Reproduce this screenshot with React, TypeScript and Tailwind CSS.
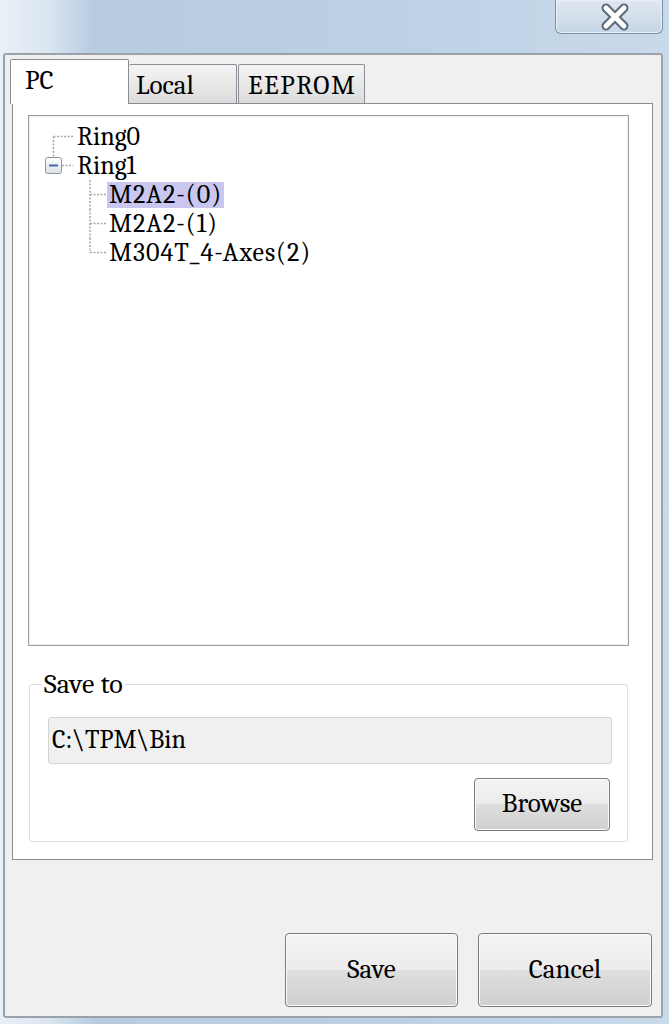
const dot = "#a6a6a6";

function WinButton({ label, className }: { label: string; className: string }) {
  return (
    <button
      className={`${className} flex items-center justify-center rounded-[4px] border border-[#7a7a7a] bg-[linear-gradient(to_bottom,#f3f3f3_0%,#ececec_50%,#dedede_50%,#d0d0d0_100%)] font-serif text-[27px] text-black shadow-[inset_0_0_0_1px_#fbfbfb]`}
    >
      {label}
    </button>
  );
}

function TreeRow({
  lines,
  width,
  label,
  selected,
  wide,
}: {
  lines: React.ReactNode;
  width: number;
  label: string;
  selected?: boolean;
  wide?: boolean;
}) {
  return (
    <div className="flex h-[29px] items-center">
      <svg width={width} height={29} className="shrink-0">
        {lines}
      </svg>
      <span
        className={`flex h-[26px] items-center px-[2px] leading-none ${wide ? "tracking-[1px]" : ""} ${selected ? "bg-[#c9c6ef]" : ""}`}
      >
        {label}
      </span>
    </div>
  );
}

export default function App() {
  const dash = { stroke: dot, strokeWidth: 1.5, strokeDasharray: "2 1.5" };
  return (
    <div className="flex h-[1024px] w-[669px] flex-col overflow-hidden bg-[linear-gradient(to_right,#e9f0f7_0%,#dbe6f1_7%,#b8cce0_14%,#bcd0e4_55%,#c8d9ea_100%)] font-serif text-black">
      {/* glass title strip */}
      <div className="flex h-[53px] shrink-0 justify-end pr-[6px]">
        <div className="flex h-[34px] w-[108px] items-center justify-center rounded-b-[6px] border border-t-0 border-[#7d90a6] bg-[linear-gradient(to_bottom,#dfe8f1,#c6d6e6)] pl-[12px] shadow-[inset_0_0_0_1px_#e8eff6]">
          <svg width="34" height="28" viewBox="0 0 34 28">
            <path d="M8 5 L26 23 M26 5 L8 23" stroke="#5d6a79" strokeWidth="9" strokeLinecap="round" />
            <path d="M8 5 L26 23 M26 5 L8 23" stroke="#ffffff" strokeWidth="5" strokeLinecap="round" />
          </svg>
        </div>
      </div>

      {/* window body */}
      <div className="ml-[3px] flex h-[965px] w-[660px] shrink-0 flex-col rounded-[3px] border-2 border-[#9ca2a9] bg-[#f0f0f0]">
        {/* tabs */}
        <div className="relative z-10 -mb-px mt-[4px] flex h-[45px] items-end pl-[5px] text-[27px]">
          <div className="flex h-[45px] w-[119px] items-center rounded-t-[2px] border border-b-0 border-[#8b8e94] bg-white pb-[2px] pl-[14px]">
            PC
          </div>
          <div className="mb-px flex h-[39px] w-[108px] items-center rounded-t-[2px] border border-b-0 border-l-0 border-[#8b8e94] bg-[linear-gradient(to_bottom,#f4f4f4,#dcdcdc)] pl-[7px] pt-[4px]">
            Local
          </div>
          <div className="mb-px ml-px flex h-[39px] w-[127px] items-center rounded-t-[2px] border border-b-0 border-[#8b8e94] bg-[linear-gradient(to_bottom,#f4f4f4,#dcdcdc)] pl-[9px] pt-[4px] tracking-[1.5px]">
            EEPROM
          </div>
        </div>

        {/* tab panel */}
        <div className="ml-[7px] flex h-[757px] w-[641px] flex-col border border-[#898c93] bg-white">
          {/* tree */}
          <div className="ml-[15px] mt-[11px] flex h-[531px] w-[601px] flex-col border border-[#9a9ea5] pt-[6px] text-[26px] shadow-[inset_0_0_0_1px_#eef0f2]">
            <TreeRow
              width={46}
              label="Ring0"
              lines={
                <>
                  <line x1={24.5} y1={14.5} x2={24.5} y2={29} style={dash} />
                  <line x1={24.5} y1={14.5} x2={44} y2={14.5} style={dash} />
                </>
              }
            />
            <TreeRow
              width={46}
              label="Ring1"
              lines={
                <>
                  <line x1={24.5} y1={0} x2={24.5} y2={6} style={dash} />
                  <line x1={33} y1={14.5} x2={44} y2={14.5} style={dash} />
                  <defs>
                    <linearGradient id="bx" x1="0" y1="0" x2="0" y2="1">
                      <stop offset="0" stopColor="#ffffff" />
                      <stop offset="1" stopColor="#dcdfe4" />
                    </linearGradient>
                  </defs>
                  <rect x={16.5} y={6.5} width={16} height={16} rx={2} fill="url(#bx)" stroke="#8f949b" />
                  <line x1={20} y1={14.5} x2={29} y2={14.5} stroke="#3f68a8" strokeWidth={2} />
                </>
              }
            />
            <TreeRow
              width={78}
              label="M2A2-(0)"
              selected
              wide
              lines={
                <>
                  <line x1={61} y1={0} x2={61} y2={29} style={dash} />
                  <line x1={61} y1={14.5} x2={77} y2={14.5} style={dash} />
                </>
              }
            />
            <TreeRow
              width={78}
              label="M2A2-(1)"
              wide
              lines={
                <>
                  <line x1={61} y1={0} x2={61} y2={29} style={dash} />
                  <line x1={61} y1={14.5} x2={77} y2={14.5} style={dash} />
                </>
              }
            />
            <TreeRow
              width={78}
              label="M304T_4-Axes(2)"
              wide
              lines={
                <>
                  <line x1={61} y1={0} x2={61} y2={14.5} style={dash} />
                  <line x1={61} y1={14.5} x2={77} y2={14.5} style={dash} />
                </>
              }
            />
          </div>

          {/* save to group */}
          <fieldset className="ml-[16px] mt-[25px] flex w-[599px] flex-col rounded-[3px] border border-[#d8e1e7] pb-[10px] pl-[18px] pr-[15px]">
            <legend className="-ml-[6px] px-[2px] text-[28px] leading-[26px]">Save to</legend>
            <div className="mt-[20px] flex h-[47px] items-center rounded-[3px] border border-[#d4d4d4] bg-[#f0f0f0] pl-[3px] text-[26px]">
              C:\TPM\Bin
            </div>
            <div className="mt-[14px] flex justify-end pr-[2px]">
              <WinButton label="Browse" className="h-[53px] w-[136px]" />
            </div>
          </fieldset>
        </div>

        {/* dialog buttons */}
        <div className="mt-[73px] flex justify-end gap-[20px] pr-[9px]">
          <WinButton label="Save" className="h-[74px] w-[173px]" />
          <WinButton label="Cancel" className="h-[74px] w-[174px]" />
        </div>
      </div>
    </div>
  );
}
